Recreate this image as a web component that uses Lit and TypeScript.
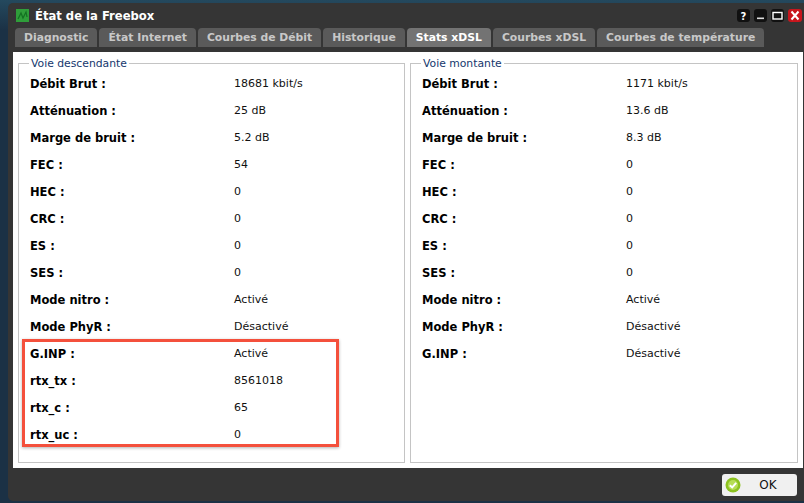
import { LitElement, html, css } from "lit";
import { customElement } from "lit/decorators.js";

const tabs = ["Diagnostic", "État Internet", "Courbes de Débit", "Historique", "Stats xDSL", "Courbes xDSL", "Courbes de température"];
const down: [string, string][] = [["Débit Brut :", "18681 kbit/s"], ["Atténuation :", "25 dB"], ["Marge de bruit :", "5.2 dB"], ["FEC :", "54"], ["HEC :", "0"], ["CRC :", "0"], ["ES :", "0"], ["SES :", "0"], ["Mode nitro :", "Activé"], ["Mode PhyR :", "Désactivé"], ["G.INP :", "Activé"], ["rtx_tx :", "8561018"], ["rtx_c :", "65"], ["rtx_uc :", "0"]];
const up: [string, string][] = [["Débit Brut :", "1171 kbit/s"], ["Atténuation :", "13.6 dB"], ["Marge de bruit :", "8.3 dB"], ["FEC :", "0"], ["HEC :", "0"], ["CRC :", "0"], ["ES :", "0"], ["SES :", "0"], ["Mode nitro :", "Activé"], ["Mode PhyR :", "Désactivé"], ["G.INP :", "Désactivé"]];

@customElement("app-root")
export class AppRoot extends LitElement {
  static styles = css`
    :host { display: block; width: 804px; height: 503px; overflow: hidden; background: linear-gradient(#24495e, #1b3145 30px); font-family: "DejaVu Sans", Verdana, sans-serif; position: relative; }
    .win { margin: 3px 0 0 8px; height: 498px; background: #353535; border-radius: 5px 0 0 5px; display: flex; flex-direction: column; box-sizing: border-box; padding: 0 1px 0 5px; }
    .title { height: 25px; display: flex; align-items: center; color: #fff; font-weight: bold; font-size: 11.6px; gap: 6px; padding: 0 0 0 3px; flex: none; }
    .ttl { flex: 1; }
    .btns { display: flex; gap: 4px; margin-right: 1px; }
    .btn { width: 13px; height: 13px; border-radius: 3px; background: #111; display: block; }
    .btn.close { width: 14px; background: #c8161d; }
    .tabs { display: flex; gap: 2px; height: 19px; padding-left: 2px; flex: none; }
    .tab { height: 19px; line-height: 19px; background: #5a5a5a; color: #c8c8c8; font-size: 10.8px; font-weight: bold; padding: 0 9px; border-radius: 4px 4px 0 0; box-sizing: border-box; white-space: nowrap; }
    .tab.on { background: #737373; color: #fff; }
    .body { margin-top: 5px; height: 416px; background: #fff; display: flex; gap: 5px; padding: 5px; box-sizing: border-box; flex: none; }
    fieldset { flex: 1 1 0; min-width: 0; margin: 0; border: 1px solid #c4c4c4; padding: 0 0 0 11px; }
    fieldset.first { flex: 0 0 387px; box-sizing: border-box; }
    legend { font-size: 10.8px; color: #15376d; padding: 0 2px; margin-left: -1px; line-height: 13px; }
    .row { display: flex; align-items: center; height: 27px; }
    .k { width: 204px; flex: none; font-size: 11.5px; font-weight: bold; color: #000; }
    .v { font-size: 11px; color: #111; }
    .foot { flex: 1; display: flex; justify-content: flex-end; align-items: center; padding-right: 6px; }
    .ok { width: 75px; height: 22px; background: #f0f0f0; border-radius: 3px; display: flex; align-items: center; font-size: 12px; color: #111; box-sizing: border-box; padding-left: 3px; }
    .ok span { flex: 1; text-align: center; padding-right: 2px; }
    .mark { position: absolute; left: 22px; top: 339px; width: 317px; height: 108px; border: 3px solid #f4503c; box-sizing: border-box; box-shadow: 0 1px 3px rgba(0,0,0,.3); }
  `;

  private rows(list: [string, string][]) {
    return list.map(([k, v]) => html`<div class="row"><div class="k">${k}</div><div class="v">${v}</div></div>`);
  }

  render() {
    return html`
      <div class="win">
        <div class="title">
          <svg width="13" height="13" viewBox="0 0 13 13"><rect width="13" height="13" fill="#2f9e3a"/><path d="M2 10 5 4 7 9 10 3 11 8" fill="none" stroke="#137022" stroke-width="1.2"/></svg>
          <div class="ttl">État de la Freebox</div>
          <div class="btns">
            <svg class="btn" viewBox="0 0 13 13"><text x="6.5" y="10.5" text-anchor="middle" font-size="10" font-weight="bold" fill="#fff">?</text></svg>
            <svg class="btn" viewBox="0 0 13 13"><rect x="3" y="8.5" width="7" height="1.6" fill="#ddd"/></svg>
            <svg class="btn" viewBox="0 0 13 13"><rect x="2" y="3.5" width="9" height="6.5" fill="none" stroke="#fff" stroke-width="1.4"/></svg>
            <svg class="btn close" viewBox="0 0 14 13"><path d="M3.5 2.5 10.5 10.5M10.5 2.5 3.5 10.5" stroke="#fff" stroke-width="2"/></svg>
          </div>
        </div>
        <div class="tabs">${tabs.map((t) => html`<div class="tab ${t === "Stats xDSL" ? "on" : ""}">${t}</div>`)}</div>
        <div class="body">
          <fieldset class="first"><legend>Voie descendante</legend>${this.rows(down)}</fieldset>
          <fieldset><legend>Voie montante</legend>${this.rows(up)}</fieldset>
        </div>
        <div class="foot">
          <div class="ok">
            <svg width="16" height="16" viewBox="0 0 16 16"><circle cx="8" cy="8" r="7.5" fill="#8cc21f"/><circle cx="8" cy="8" r="5" fill="#b6dd55"/><path d="M4.8 8.2 7.2 10.4 11.2 5.8" fill="none" stroke="#fff" stroke-width="2"/></svg>
            <span>OK</span>
          </div>
        </div>
      </div>
      <div class="mark"></div>
    `;
  }
}
